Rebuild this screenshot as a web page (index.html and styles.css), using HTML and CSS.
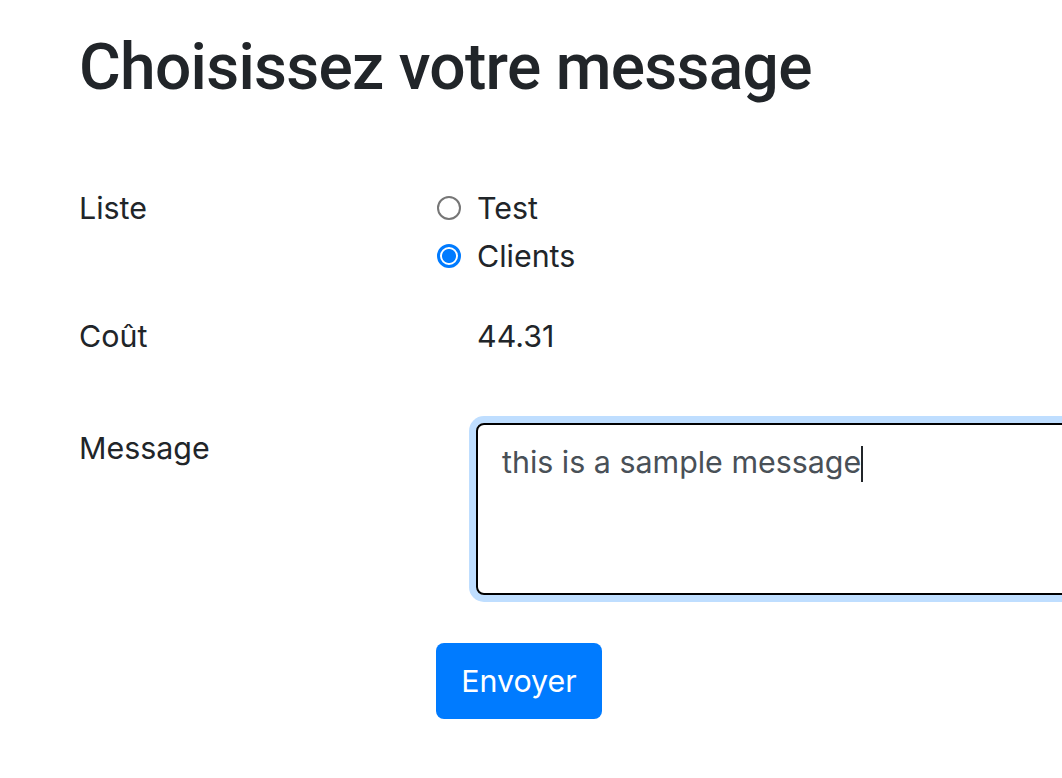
FILE: index.html
```html
<!DOCTYPE html>
<html lang="fr">
<head>
<meta charset="utf-8">
<title>Choisissez votre message</title>
<link rel="stylesheet" href="styles.css">
</head>
<body>
<main class="page">
  <h1 class="title">Choisissez votre message</h1>
  <form class="form">
    <div class="row row-liste">
      <div class="label">Liste</div>
      <div class="field">
        <label class="radio"><span class="radio-mark"></span>Test</label>
        <label class="radio"><span class="radio-mark checked"></span>Clients</label>
      </div>
    </div>
    <div class="row row-cout">
      <div class="label">Coût</div>
      <div class="field value">44.31</div>
    </div>
    <div class="row row-message">
      <div class="label label-message">Message</div>
      <div class="field">
        <div class="textarea">this is a sample message<span class="caret"></span></div>
      </div>
    </div>
    <div class="row row-submit">
      <div class="label"></div>
      <div class="field">
        <button type="button" class="btn">Envoyer</button>
      </div>
    </div>
  </form>
</main>
</body>
</html>
```
FILE: styles.css
```css
html, body {
  margin: 0;
  padding: 0;
  overflow: hidden;
  background: #fff;
}
body {
  font-family: Inter, "Liberation Sans", sans-serif;
  font-size: 30.4px;
  line-height: 48px;
  color: #212529;
}
.page {
  padding: 29px 0 0 79px;
}
.title {
  margin: 0;
  font-family: Roboto, Inter, sans-serif;
  font-size: 64px;
  line-height: 77px;
  font-weight: 500;
  letter-spacing: -0.7px;
}
.form {
  margin-top: 78px;
}
.row {
  display: flex;
  align-items: flex-start;
}
.label {
  width: 357px;
  flex: none;
}
.field {
  flex: none;
}
.value {
  padding-left: 41px;
}
.radio {
  display: flex;
  align-items: center;
}
.radio-mark {
  width: 24px;
  height: 24px;
  box-sizing: border-box;
  border-radius: 50%;
  border: 2px solid #767676;
  margin: 0 16px 0 1px;
  background: #fff;
}
.radio-mark.checked {
  border: 3px solid #007bff;
  background: radial-gradient(circle, #007bff 0 6.5px, #fff 7.5px);
}
.row-cout {
  margin-top: 32px;
}
.row-message {
  margin-top: 63px;
}
.label-message {
  padding-top: 1px;
}
.textarea {
  margin-left: 40px;
  width: 640px;
  height: 172px;
  box-sizing: border-box;
  border: 2px solid #000;
  border-radius: 8px;
  box-shadow: 0 0 0 7px #bfdeff;
  padding: 13px 24px;
  color: #495057;
}
.caret {
  display: inline-block;
  width: 1.5px;
  height: 36px;
  background: #212529;
  vertical-align: -9px;
}
.row-submit {
  margin-top: 48px;
}
.btn {
  font: inherit;
  width: 166px;
  height: 76px;
  border: 0;
  border-radius: 8px;
  background: #007bff;
  color: #fff;
  padding: 0;
}
```
